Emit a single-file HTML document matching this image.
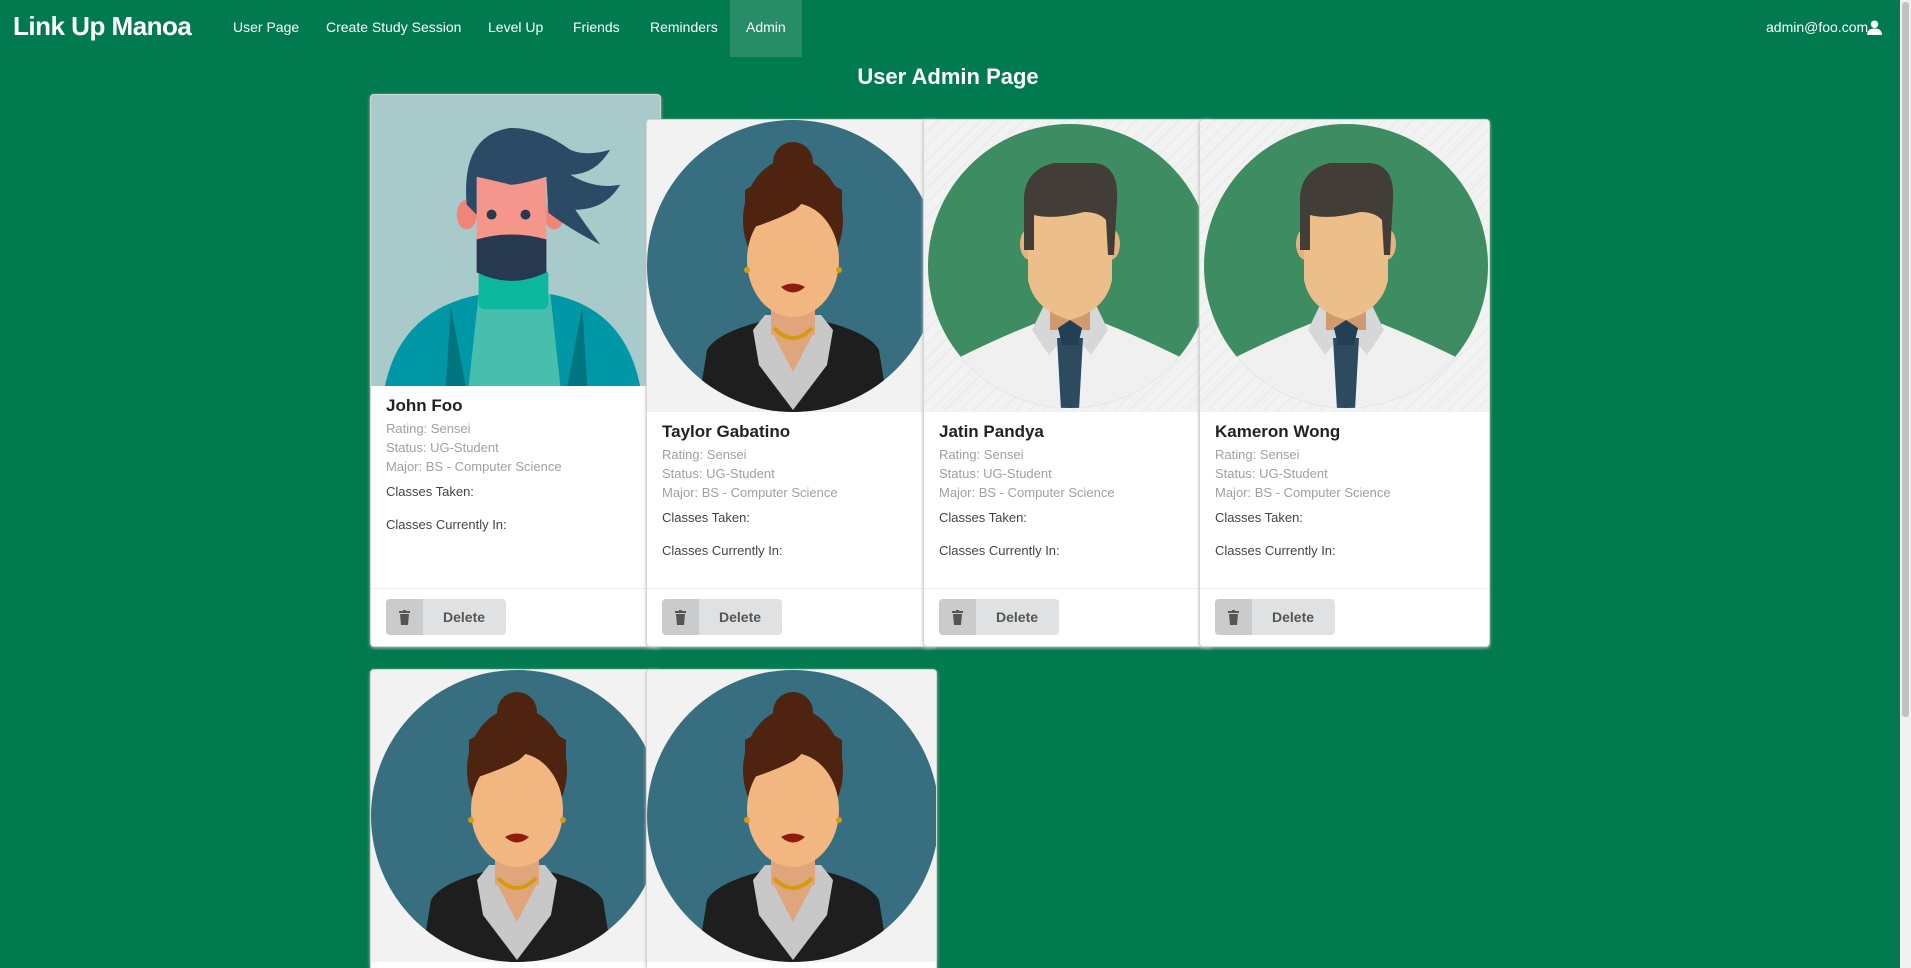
<!DOCTYPE html>
<html><head><meta charset="utf-8">
<style>
*{box-sizing:border-box;margin:0;padding:0}
html,body{width:1911px;height:968px;overflow:hidden}
body{background:#007a4e;font-family:"Liberation Sans",sans-serif;position:relative}
.nav{position:absolute;top:0;left:0;width:1900px;height:57px;color:#fff}
.brand{position:absolute;left:13px;top:11px;font-size:26px;font-weight:bold;letter-spacing:-0.5px}
.nav a{position:absolute;top:19px;font-size:14px;color:#fff}
.admin{position:absolute;left:730px;top:0;width:72px;height:57px;background:rgba(255,255,255,0.15)}
.sb{position:absolute;right:0;top:0;width:11px;height:968px;background:#f1f1f1}
.sb div{position:absolute;left:2px;top:2px;width:7px;height:715px;background:#c1c1c1;border-radius:3px}
h1{position:absolute;left:0;width:1896px;text-align:center;top:64px;font-size:22px;color:#fff}
.card{position:absolute;width:291px;background:#fff;border-radius:4px;box-shadow:0 1px 3px #bbb;overflow:hidden;border:1px solid #d4d4d5}
.img{height:292px;background:#f2f2f2;display:block}
.img svg{display:block}
.ct{padding:10px 15px 0}
.nm{font-size:17px;font-weight:bold;color:#222;margin-bottom:3px}
.mt{font-size:13px;color:#a0a0a0;line-height:19px}
.ds{font-size:13px;color:#444;margin-top:8px;height:25px}
.ex{position:absolute;left:0;right:0;top:494px;border-top:1px solid #eee;padding:10px 15px}
.btn{width:120px;height:36px;background:#e0e1e2;border-radius:4px;position:relative;font-size:14px;font-weight:bold;color:#555}
.btn i{position:absolute;left:0;top:0;width:37px;height:36px;background:#cacbcd;border-radius:4px 0 0 4px}
.btn span{position:absolute;left:57px;top:10px}
</style></head><body>
<svg width="0" height="0" style="position:absolute">
<defs>
<pattern id="st" width="10" height="10" patternUnits="userSpaceOnUse" patternTransform="rotate(45)"><rect width="10" height="10" fill="#f2f2f2"/><rect width="1" height="10" fill="#e8e8e8"/></pattern>
<symbol id="w" viewBox="0 0 292 292">
<rect width="292" height="292" fill="#f2f2f2"/>
<circle cx="146" cy="146" r="146" fill="#376f80"/>
<clipPath id="cw"><circle cx="146" cy="146" r="146"/></clipPath>
<g clip-path="url(#cw)">
<path d="M50 292 L60 230 Q70 212 120 200 L172 200 Q222 212 232 230 L242 292Z" fill="#1e1e1e"/>
<path d="M118 195 L106 210 L112 245 L146 290 L180 245 L186 210 L174 195Z" fill="#c8c8c8"/>
<rect x="124" y="175" width="44" height="40" fill="#e0a57a"/>
<path d="M124 210 L146 252 L168 210Z" fill="#e0a57a"/>
<path d="M127 208 Q146 228 165 208" stroke="#d49a10" stroke-width="4" fill="none"/>
<circle cx="146" cy="42" r="20" fill="#4e2410"/>
<ellipse cx="146" cy="100" rx="50" ry="62" fill="#4e2410"/>
<ellipse cx="146" cy="140" rx="46" ry="57" fill="#f2b681"/>
<path d="M98 110 Q130 100 148 90 Q160 80 162 70 Q175 95 195 110 L195 70 Q146 40 98 70Z" fill="#4e2410"/>
<path d="M134 167 Q146 160 158 167 Q146 178 134 167Z" fill="#8e1b10"/>
<circle cx="100" cy="150" r="3" fill="#d49a10"/><circle cx="192" cy="150" r="3" fill="#d49a10"/>
</g></symbol>
<symbol id="m" viewBox="0 0 292 292">
<rect width="292" height="292" fill="url(#st)"/>
<circle cx="146" cy="146" r="142" fill="#3e8d62"/>
<clipPath id="cm"><circle cx="146" cy="146" r="142"/></clipPath>
<g clip-path="url(#cm)">
<path d="M30 240 Q80 215 120 200 L172 200 Q212 215 262 240 L262 292 L30 292Z" fill="#f0f0f0"/>
<path d="M120 185 L108 210 L125 235 L146 210 L167 235 L184 210 L172 185Z" fill="#d6d7d9"/>
<rect x="126" y="170" width="40" height="40" fill="#cf9a70"/>
<path d="M133 218 L159 218 L155 290 L137 290Z" fill="#2d4b5f"/>
<path d="M134 208 L146 200 L158 208 L154 225 L138 225Z" fill="#213e52"/>
<ellipse cx="106" cy="124" rx="10" ry="16" fill="#e6b07f"/><ellipse cx="186" cy="124" rx="10" ry="16" fill="#e6b07f"/>
<path d="M104 90 L104 160 Q110 190 146 200 Q182 190 188 160 L188 90Z" fill="#ecbe8a"/>
<path d="M100 130 L100 80 Q100 50 130 43 L170 43 Q195 45 193 80 L190 135 L184 135 L182 100 Q175 92 160 92 Q130 100 110 95 L110 130Z" fill="#433d37"/>
</g></symbol>
</defs></svg>

<div class="nav">
<div class="brand">Link Up Manoa</div>
<div class="admin"></div>
<a style="left:233px">User Page</a>
<a style="left:326px">Create Study Session</a>
<a style="left:488px">Level Up</a>
<a style="left:573px">Friends</a>
<a style="left:650px">Reminders</a>
<a style="left:746px">Admin</a>
<a style="left:1766px">admin@foo.com</a>
<svg style="position:absolute;left:1867px;top:20px" width="15" height="15" viewBox="0 0 16 16"><circle cx="8" cy="4.5" r="4" fill="#fff"/><path d="M0 16 Q0 9 8 9 Q16 9 16 16Z" fill="#fff"/></svg>
</div>
<div class="sb"><div></div></div>
<h1>User Admin Page</h1>

<div class="card" style="left:370px;top:94px;height:553px">
<div class="img" style="height:291px"><svg width="291" height="291" viewBox="0 0 292 292">
<rect width="292" height="292" fill="#a9cacb"/>
<path d="M14 292 Q30 215 110 200 L182 200 Q255 215 270 292Z" fill="#0097a7"/>
<path d="M80 212 L75 292 L95 292Z M212 212 L217 292 L197 292Z" fill="#00747f"/>
<path d="M108 200 L98 292 L190 292 L180 200Z" fill="#47bfac"/>
<rect x="108" y="175" width="70" height="40" rx="6" fill="#0bb89e"/>
<rect x="120" y="160" width="46" height="22" fill="#f4968c"/>
<ellipse cx="96" cy="120" rx="10" ry="15" fill="#ef8479"/><ellipse cx="184" cy="120" rx="10" ry="15" fill="#ef8479"/>
<path d="M106 80 L176 80 L176 170 L106 170Z" fill="#f4968c"/>
<path d="M106 145 Q141 135 176 145 L176 178 Q141 195 106 178Z" fill="#27394f"/>
<circle cx="121" cy="120" r="5" fill="#27394f"/><circle cx="155" cy="120" r="5" fill="#27394f"/>
<path d="M96 110 Q90 40 140 33 Q170 33 200 55 Q215 62 240 55 Q225 80 200 80 Q225 95 250 90 Q235 115 205 115 Q215 130 230 150 Q200 135 178 118 L176 82 Q150 90 140 90 Q120 85 106 82 L106 120Z" fill="#2b4a66"/>
</svg></div>
<div class="ct">
<div class="nm">John Foo</div>
<div class="mt">Rating: Sensei<br>Status: UG-Student<br>Major: BS - Computer Science</div>
<div class="ds">Classes Taken:</div><div class="ds">Classes Currently In:</div>
</div>
<div class="ex" style="top:493px"><div class="btn"><i><svg width="37" height="36"><path d="M14 15h9l-1 11h-7zM13 12h11v2H13zM17 11h3v1h-3z" fill="#555"/></svg></i><span>Delete</span></div></div>
</div>

<div class="card" style="left:646px;top:119px;height:528px">
<div class="img"><svg width="291" height="292"><use href="#w" width="292" height="292"/></svg></div>
<div class="ct"><div class="nm">Taylor Gabatino</div>
<div class="mt">Rating: Sensei<br>Status: UG-Student<br>Major: BS - Computer Science</div>
<div class="ds">Classes Taken:</div><div class="ds">Classes Currently In:</div></div>
<div class="ex" style="top:468px"><div class="btn"><i><svg width="37" height="36"><path d="M14 15h9l-1 11h-7zM13 12h11v2H13zM17 11h3v1h-3z" fill="#555"/></svg></i><span>Delete</span></div></div>
</div>

<div class="card" style="left:923px;top:119px;height:528px">
<div class="img"><svg width="291" height="292"><use href="#m" width="292" height="292"/></svg></div>
<div class="ct"><div class="nm">Jatin Pandya</div>
<div class="mt">Rating: Sensei<br>Status: UG-Student<br>Major: BS - Computer Science</div>
<div class="ds">Classes Taken:</div><div class="ds">Classes Currently In:</div></div>
<div class="ex" style="top:468px"><div class="btn"><i><svg width="37" height="36"><path d="M14 15h9l-1 11h-7zM13 12h11v2H13zM17 11h3v1h-3z" fill="#555"/></svg></i><span>Delete</span></div></div>
</div>

<div class="card" style="left:1199px;top:119px;height:528px">
<div class="img"><svg width="291" height="292"><use href="#m" width="292" height="292"/></svg></div>
<div class="ct"><div class="nm">Kameron Wong</div>
<div class="mt">Rating: Sensei<br>Status: UG-Student<br>Major: BS - Computer Science</div>
<div class="ds">Classes Taken:</div><div class="ds">Classes Currently In:</div></div>
<div class="ex" style="top:468px"><div class="btn"><i><svg width="37" height="36"><path d="M14 15h9l-1 11h-7zM13 12h11v2H13zM17 11h3v1h-3z" fill="#555"/></svg></i><span>Delete</span></div></div>
</div>

<div class="card" style="left:370px;top:669px;height:299px;border-bottom:none;border-radius:4px 4px 0 0">
<div class="img"><svg width="291" height="292"><use href="#w" width="292" height="292"/></svg></div>
</div>
<div class="card" style="left:646px;top:669px;height:299px;border-bottom:none;border-radius:4px 4px 0 0">
<div class="img"><svg width="291" height="292"><use href="#w" width="292" height="292"/></svg></div>
</div>
</body></html>
